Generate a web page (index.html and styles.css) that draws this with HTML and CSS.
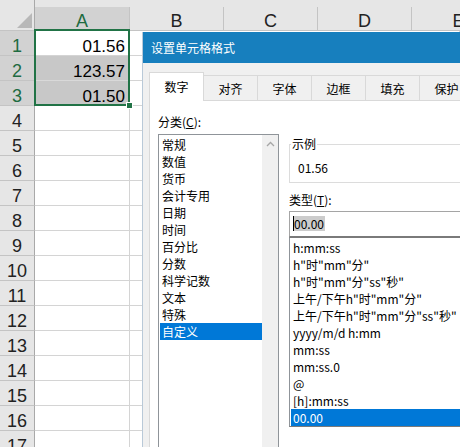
FILE: index.html
```html
<!DOCTYPE html>
<html>
<head>
<meta charset="utf-8">
<link rel="stylesheet" href="styles.css">
</head>
<body>

<div class="sheet">
  <div class="hdr">
    <div class="corner">
      <svg width="34" height="30" viewBox="0 0 34 30"><polygon points="17,28 32,28 32,13" fill="#b8b8b8"/></svg>
    </div>
    <div class="cols">
      <div class="ch wide sel">A</div>
      <div class="ch">B</div>
      <div class="ch">C</div>
      <div class="ch">D</div>
      <div class="ch">E</div>
    </div>
  </div>
  <div class="row"><div class="rh sel">1</div><div class="c num">01.56</div><div class="c rest"></div></div>
  <div class="row"><div class="rh sel">2</div><div class="c num shade">123.57</div><div class="c rest"></div></div>
  <div class="row"><div class="rh sel">3</div><div class="c num shade">01.50</div><div class="c rest"></div></div>
  <div class="row"><div class="rh">4</div><div class="c"></div><div class="c rest"></div></div>
  <div class="row"><div class="rh">5</div><div class="c"></div><div class="c rest"></div></div>
  <div class="row"><div class="rh">6</div><div class="c"></div><div class="c rest"></div></div>
  <div class="row"><div class="rh">7</div><div class="c"></div><div class="c rest"></div></div>
  <div class="row"><div class="rh">8</div><div class="c"></div><div class="c rest"></div></div>
  <div class="row"><div class="rh">9</div><div class="c"></div><div class="c rest"></div></div>
  <div class="row"><div class="rh">10</div><div class="c"></div><div class="c rest"></div></div>
  <div class="row"><div class="rh">11</div><div class="c"></div><div class="c rest"></div></div>
  <div class="row"><div class="rh">12</div><div class="c"></div><div class="c rest"></div></div>
  <div class="row"><div class="rh">13</div><div class="c"></div><div class="c rest"></div></div>
  <div class="row"><div class="rh">14</div><div class="c"></div><div class="c rest"></div></div>
  <div class="row"><div class="rh">15</div><div class="c"></div><div class="c rest"></div></div>
  <div class="row"><div class="rh">16</div><div class="c"></div><div class="c rest"></div></div>
  <div class="row"><div class="rh">17</div><div class="c"></div><div class="c rest"></div></div>

  <div class="selection"></div>
  <div class="fill-handle"></div>
</div>

<div class="dialog">
  <div class="dlg-title">设置单元格格式</div>
  <div class="dlg-body">
    <div class="tabs">
      <div class="tab active">数字</div>
      <div class="tab">对齐</div>
      <div class="tab">字体</div>
      <div class="tab">边框</div>
      <div class="tab">填充</div>
      <div class="tab">保护</div>
    </div>
    <div class="panel">
      <div class="col-left">
        <div class="label">分类(<u>C</u>):</div>
        <div class="listbox cats">
          <div class="items">
            <div class="item">常规</div>
            <div class="item">数值</div>
            <div class="item">货币</div>
            <div class="item">会计专用</div>
            <div class="item">日期</div>
            <div class="item">时间</div>
            <div class="item">百分比</div>
            <div class="item">分数</div>
            <div class="item">科学记数</div>
            <div class="item">文本</div>
            <div class="item">特殊</div>
            <div class="item picked">自定义</div>
          </div>
          <div class="scrollbar">
            <div class="sb-btn">
              <svg width="9" height="6" viewBox="0 0 9 6"><polyline points="1,5 4.5,1.5 8,5" fill="none" stroke="#a6a6a6" stroke-width="1.3"/></svg>
            </div>
          </div>
        </div>
      </div>
      <div class="col-right">
        <fieldset class="sample">
          <legend>示例</legend>
          <div class="sample-val">01.56</div>
        </fieldset>
        <div class="label type-label">类型(<u>T</u>):</div>
        <div class="input"><span class="sel-text">00.00</span></div>
        <div class="listbox formats">
          <div class="item">h:mm:ss</div>
          <div class="item">h"时"mm"分"</div>
          <div class="item">h"时"mm"分"ss"秒"</div>
          <div class="item">上午/下午h"时"mm"分"</div>
          <div class="item">上午/下午h"时"mm"分"ss"秒"</div>
          <div class="item">yyyy/m/d h:mm</div>
          <div class="item">mm:ss</div>
          <div class="item">mm:ss.0</div>
          <div class="item">@</div>
          <div class="item">[h]:mm:ss</div>
          <div class="item picked">00.00</div>
        </div>
      </div>
    </div>
  </div>
</div>

</body>
</html>
```

FILE: styles.css
```css
* {box-sizing: border-box;}
body {
  margin: 0;
  width: 460px;
  height: 447px;
  overflow: hidden;
  background: #fff;
  font-family: "Liberation Sans", Arial, sans-serif;
}

/* spreadsheet */
.sheet {position: relative;}
.hdr {
  display: flex;
  height: 31px;
  background: #e6e6e6;
}
.corner {
  width: 35px;
  border-right: 1px solid #a9a9a9;
  border-bottom: 1px solid #c4c4c4;
}
.corner svg {display: block;}
.cols {
  display: flex;
  flex: 1;
  padding-top: 7px;
  border-bottom: 1px solid #c4c4c4;
}
.ch {
  width: 94px;
  flex: none;
  border-right: 1px solid #c4c4c4;
  display: flex;
  align-items: flex-end;
  justify-content: center;
  font-size: 18px;
  line-height: 18px;
  color: #222;
}
.ch.wide {width: 95px;}
.ch.sel {background: #d2d2d2; color: #1e6b41;}
.row {
  display: flex;
  height: 25px;
}
.rh {
  width: 35px;
  background: #e6e6e6;
  border-right: 1px solid #a9a9a9;
  border-bottom: 1px solid #c4c4c4;
  display: flex;
  align-items: flex-end;
  justify-content: center;
  font-size: 18px;
  line-height: 18px;
  color: #222;
}
.rh.sel {background: #d2d2d2; color: #1e6b41;}
.c {
  width: 95px;
  border-right: 1px solid #d4d4d4;
  border-bottom: 1px solid #d4d4d4;
}
.c.rest {flex: 1; width: auto;}
.num {
  display: flex;
  align-items: flex-end;
  justify-content: flex-end;
  padding-right: 4px;
  font-size: 17px;
  line-height: 17px;
  color: #000;
}
.shade {background: #c8c8c8; border-bottom-color: #d9d9d9;}
.selection {
  position: absolute;
  left: 34px;
  top: 29px;
  width: 96px;
  height: 77px;
  border: 2px solid #217346;
}
.fill-handle {
  position: absolute;
  left: 126px;
  top: 102px;
  width: 7px;
  height: 7px;
  background: #217346;
  border: 1px solid #fff;
}

/* format cells dialog */
.dialog {
  position: absolute;
  left: 142px;
  top: 32px;
  width: 340px;
  height: 430px;
  background: #f0f0f0;
  border-left: 1px solid #b9c9d8;
  font-family: "Noto Sans CJK SC", "Noto Sans", sans-serif;
  font-size: 12px;
  color: #000;
}
.dlg-title {
  height: 31px;
  background: #177fbe;
  color: #fff;
  padding-left: 8px;
  line-height: 31px;
}
.dlg-body {padding: 9px 0 0 6px;}
.tabs {
  display: flex;
  align-items: flex-end;
  height: 28px;
}
.tab {
  width: 55px;
  height: 25px;
  margin-left: -1px;
  border: 1px solid #d9d9d9;
  border-bottom: none;
  text-align: center;
  line-height: 25px;
}
.tab.active {
  height: 29px;
  margin-left: 0;
  margin-bottom: -1px;
  background: #fff;
  line-height: 27px;
  position: relative;
  z-index: 1;
}
.panel {
  display: flex;
  gap: 10px;
  height: 360px;
  background: #fff;
  border: 1px solid #d9d9d9;
  border-right: none;
  padding: 12px 0 0 8px;
}
.label {line-height: 17px;}
.listbox {
  border: 1px solid #8f9499;
  background: #fff;
  padding: 1px;
}
.cats {
  display: flex;
  width: 121px;
  height: 330px;
  margin-top: 4px;
  padding-right: 0;
}
.cats .items {width: 102px;}
.item {
  height: 17px;
  line-height: 17px;
  padding-left: 2px;
  white-space: nowrap;
}
.item.picked {background: #0078d7; color: #fff;}
.scrollbar {
  width: 16px;
  background: #f0f0f0;
  margin-top: -1px;
}
.sb-btn {
  height: 17px;
  display: flex;
  align-items: center;
  justify-content: center;
}
.sb-btn svg {display: block;}
.col-right {flex: 1;}
.sample {
  margin: 23px 0 0;
  padding: 8px 8px 6px;
  border: 1px solid #dcdcdc;
  border-right: none;
}
.sample legend {
  margin-left: -7px;
  padding: 0 1px;
  line-height: 16px;
}
.sample-val {line-height: 16px;}
.type-label {margin-top: 8px;}
.input {
  margin-top: 3px;
  height: 26px;
  border: 1px solid #a5a5a5;
  border-bottom-color: #7a7a7a;
  border-right: none;
  padding: 3px 0 0 3px;
}
.sel-text {
  display: inline-block;
  background: #cccccc;
  border-left: 1px solid #000;
  line-height: 15px;
  padding-right: 1px;
}
.formats {
  height: 190px;
  border-top-color: #7a7a7a;
  border-bottom-color: #7a7a7a;
  border-right: none;
}
.formats .item {padding-left: 2px;}
```
